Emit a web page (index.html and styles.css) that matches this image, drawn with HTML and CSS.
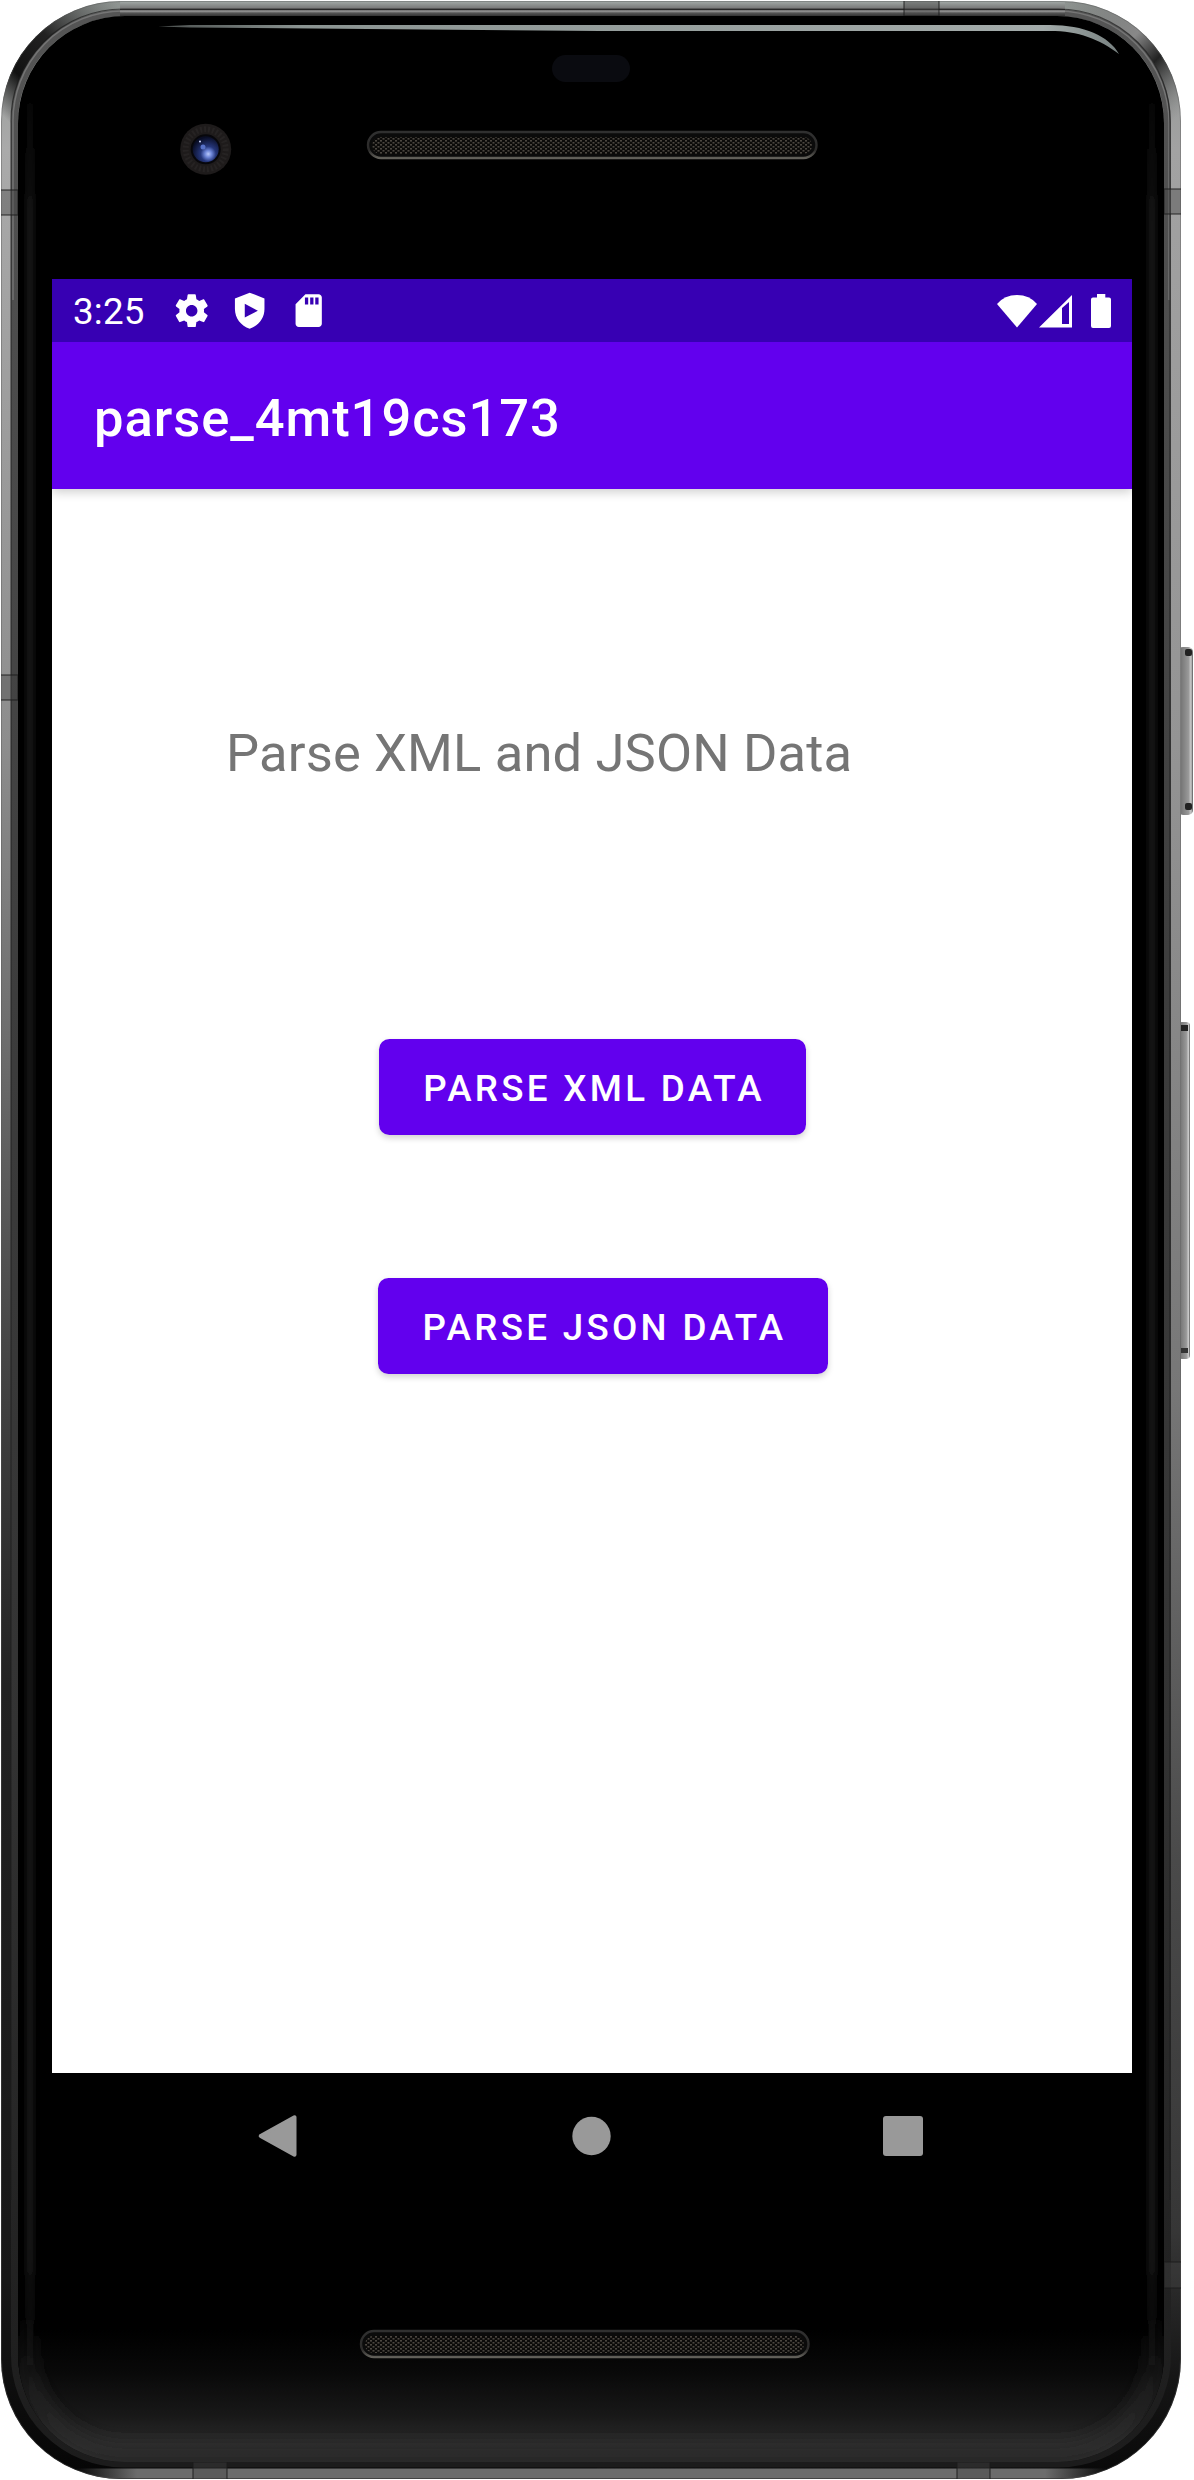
FILE: index.html
```html
<!DOCTYPE html>
<html lang="en">
<head>
<meta charset="utf-8">
<title>parse_4mt19cs173</title>
<link rel="stylesheet" href="styles.css">
</head>
<body>
<div class="phone">
  <svg class="chassis" viewBox="0 0 1194 2480" aria-hidden="true">
    <defs>
      <linearGradient id="rimL" gradientUnits="userSpaceOnUse" x1="0" y1="0" x2="0" y2="2480">
        <stop offset="0" stop-color="#8d9390"/><stop offset=".06" stop-color="#aaa"/><stop offset=".3" stop-color="#8d8d8d"/><stop offset=".42" stop-color="#6d6d6d"/><stop offset=".55" stop-color="#444"/><stop offset=".68" stop-color="#222"/><stop offset=".92" stop-color="#171717"/><stop offset="1" stop-color="#050505"/>
      </linearGradient>
      <linearGradient id="rimR" gradientUnits="userSpaceOnUse" x1="0" y1="0" x2="0" y2="2480">
        <stop offset="0" stop-color="#8d9390"/><stop offset=".06" stop-color="#a2a2a2"/><stop offset=".3" stop-color="#949494"/><stop offset=".56" stop-color="#777"/><stop offset=".75" stop-color="#4a4a4a"/><stop offset=".9" stop-color="#363636"/><stop offset=".96" stop-color="#151515"/><stop offset="1" stop-color="#080808"/>
      </linearGradient>
      <linearGradient id="edge" x1="0" y1="0" x2="0" y2="1">
        <stop offset="0" stop-color="#555"/><stop offset=".4" stop-color="#3d3d3d"/><stop offset=".7" stop-color="#333"/><stop offset="1" stop-color="#1c1c1c"/>
      </linearGradient>
      <linearGradient id="topRim" x1="0" y1="0" x2="0" y2="1">
        <stop offset="0" stop-color="#a4aba8"/><stop offset=".5" stop-color="#777"/><stop offset=".55" stop-color="#222"/><stop offset=".68" stop-color="#999"/><stop offset=".8" stop-color="#555"/><stop offset="1" stop-color="#333"/>
      </linearGradient>
      <linearGradient id="bottomRim" x1="0" y1="0" x2="1" y2="0">
        <stop offset="0" stop-color="#6c6c6c" stop-opacity="0"/><stop offset=".06" stop-color="#6c6c6c"/><stop offset=".94" stop-color="#6c6c6c"/><stop offset="1" stop-color="#6c6c6c" stop-opacity="0"/>
      </linearGradient>
      <linearGradient id="cornerTL" gradientUnits="userSpaceOnUse" x1="2" y1="115" x2="115" y2="2">
        <stop offset="0" stop-color="#111" stop-opacity="0"/><stop offset=".25" stop-color="#111"/><stop offset=".55" stop-color="#222"/><stop offset="1" stop-color="#444" stop-opacity="0"/>
      </linearGradient>
      <linearGradient id="cornerTR" gradientUnits="userSpaceOnUse" x1="1067" y1="2" x2="1180" y2="115">
        <stop offset="0" stop-color="#666" stop-opacity="0"/><stop offset=".45" stop-color="#888"/><stop offset=".65" stop-color="#222"/><stop offset="1" stop-color="#777" stop-opacity="0"/>
      </linearGradient>
      <linearGradient id="fade" x1="0" y1="0" x2="0" y2="1">
        <stop offset="0" stop-color="#000"/><stop offset=".3" stop-color="#080808"/><stop offset=".65" stop-color="#181818"/><stop offset=".88" stop-color="#2c2c2c"/><stop offset="1" stop-color="#262626"/>
      </linearGradient>
      <linearGradient id="glow" gradientUnits="userSpaceOnUse" x1="0" y1="80" x2="0" y2="2390">
        <stop offset="0" stop-color="#1c1c1c" stop-opacity="0"/><stop offset=".06" stop-color="#1c1c1c"/><stop offset=".94" stop-color="#1c1c1c"/><stop offset="1" stop-color="#1c1c1c" stop-opacity="0"/>
      </linearGradient>
      <linearGradient id="pool" gradientUnits="userSpaceOnUse" x1="0" y1="2310" x2="0" y2="2430">
        <stop offset="0" stop-color="#2c2c2c" stop-opacity="0"/><stop offset="1" stop-color="#2c2c2c"/>
      </linearGradient>
      <linearGradient id="shine" gradientUnits="userSpaceOnUse" x1="158" y1="0" x2="1120" y2="0">
        <stop offset="0" stop-color="#7d8583" stop-opacity=".6"/><stop offset=".15" stop-color="#8b9492"/><stop offset=".92" stop-color="#a3abaa"/><stop offset="1" stop-color="#778180"/>
      </linearGradient>
      <linearGradient id="slot" x1="0" y1="0" x2="0" y2="1">
        <stop offset="0" stop-color="#303030"/><stop offset=".7" stop-color="#2c2b2a"/><stop offset="1" stop-color="#62605a"/>
      </linearGradient>
      <linearGradient id="key" x1="0" y1="0" x2="1" y2="0">
        <stop offset="0" stop-color="#666"/><stop offset=".3" stop-color="#7d7d7d"/><stop offset=".7" stop-color="#999"/><stop offset=".87" stop-color="#ccc"/><stop offset="1" stop-color="#555"/>
      </linearGradient>
      <radialGradient id="lens" cx=".6" cy=".68" r=".65">
        <stop offset="0" stop-color="#b9c8fa"/><stop offset=".2" stop-color="#6e86d8"/><stop offset=".45" stop-color="#25367a"/><stop offset="1" stop-color="#090d24"/>
      </radialGradient>
      <pattern id="mesh" width="5" height="4" patternUnits="userSpaceOnUse">
        <rect width="5" height="4" fill="#0b0a09"/><rect width="2" height="1.6" fill="#4b4640"/><rect x="2.5" y="2" width="2" height="1.6" fill="#4b4640"/>
      </pattern>
      <clipPath id="body"><rect x="1" y="1" width="1180" height="2478" rx="120"/></clipPath>
      <clipPath id="glass"><rect x="18" y="16" width="1146" height="2446" rx="107"/></clipPath>
      <filter id="soft" x="-10%" y="-10%" width="120%" height="120%"><feGaussianBlur stdDeviation="9"/></filter>
      <filter id="haze" filterUnits="userSpaceOnUse" x="0" y="0" width="1194" height="2480"><feGaussianBlur stdDeviation="3"/></filter>
    </defs>

    <!-- volume and power keys -->
    <rect x="1178" y="647" width="15" height="168" rx="5" fill="url(#key)"/>
    <rect x="1185" y="649" width="7" height="7" rx="2" fill="#222"/><rect x="1185" y="803" width="7" height="7" rx="2" fill="#222"/>
    <rect x="1178" y="1022" width="12" height="337" rx="4" fill="url(#key)"/>
    <rect x="1181" y="1025" width="7" height="6" fill="#222"/><rect x="1181" y="1348" width="7" height="5" fill="#333"/>

    <!-- metal rim -->
    <g clip-path="url(#body)">
      <rect width="597" height="2480" fill="url(#rimL)"/>
      <rect x="597" width="597" height="2480" fill="url(#rimR)"/>
      <path d="M7 150V121A114 114 0 0 1 121 7H150" fill="none" stroke="url(#cornerTL)" stroke-width="13"/>
      <path d="M1045 7H1061A114 114 0 0 1 1175 121V150" fill="none" stroke="url(#cornerTR)" stroke-width="13"/>
      <rect x="14.500" y="13" width="1153" height="2451" rx="109" fill="none" stroke="url(#edge)" stroke-width="7"/>
      <rect x="120" y="1" width="945" height="15" fill="url(#topRim)"/>
      <rect x="75" y="2468.500" width="1032" height="10" fill="url(#bottomRim)"/>
      <path d="M13 300V123A110 110 0 0 1 123 11H1058A112 112 0 0 1 1169 123V300" fill="none" stroke="#8a8a8a" stroke-width="1.500" opacity=".6"/>
      <path d="M11 2200V123A112 112 0 0 1 123 9H1058A112 112 0 0 1 1170 123V2200" fill="none" stroke="#1c1c1c" stroke-width="1.200" opacity=".7"/>
      <rect x="1.500" y="1.500" width="1179" height="2477" rx="119.500" fill="none" stroke="#555" stroke-opacity=".4"/>
      <!-- antenna breaks -->
      <g fill="#444" fill-opacity=".4" stroke="#1b1b1b" stroke-opacity=".7" stroke-width="1.300">
        <rect x="0" y="190" width="18" height="25"/><rect x="0" y="675" width="18" height="25"/>
        <rect x="1164" y="189" width="18" height="25"/><rect x="904" y="0" width="35" height="16"/>
        <rect x="1164" y="2262" width="18" height="26"/><rect x="193" y="2462" width="34" height="18"/><rect x="957" y="2462" width="33" height="18"/>
      </g>
    </g>

    <!-- front glass -->
    <g clip-path="url(#glass)">
      <rect x="18" y="16" width="1146" height="2446" fill="#000"/>
      <rect x="18" y="2330" width="1146" height="132" fill="url(#fade)"/>
      <path d="M27 2300V2355A98 98 0 0 0 125 2453H1057A98 98 0 0 0 1155 2355V2300" fill="none" stroke="url(#pool)" stroke-width="16" filter="url(#soft)"/>
      <g filter="url(#haze)" fill="url(#glow)">
        <rect x="27" y="80" width="6" height="2310"/>
        <rect x="1149" y="80" width="6" height="2310"/>
      </g>
    </g>
    <path d="M158 26.500 190 25H1050C1084 25 1109 36 1119 54C1099 39 1079 31 1050 31H600L190 27.500Z" fill="url(#shine)"/>

    <rect x="552" y="55" width="78" height="27" rx="13.500" fill="#0a0b10"/>
    <circle cx="205.700" cy="149.300" r="25.500" fill="#1e1b1b"/>
    <circle cx="205.700" cy="149.300" r="20" fill="none" stroke="#262323" stroke-width="6" stroke-dasharray="2 2"/>
    <circle cx="205.700" cy="149.300" r="15" fill="#07070b"/>
    <circle cx="205.700" cy="149.300" r="13" fill="url(#lens)"/>
    <circle cx="203" cy="147" r="2.500" fill="#5872c8"/><circle cx="200" cy="141.500" r="1" fill="#cfd8ff"/>

    <rect x="368" y="132" width="448.500" height="26" rx="13" fill="#0b0b0b" stroke="url(#slot)" stroke-width="2.400"/>
    <rect x="372" y="137" width="440" height="17" rx="8.500" fill="url(#mesh)"/>
    <rect x="361" y="2331" width="447.500" height="26" rx="13" fill="#0b0b0b" stroke="url(#slot)" stroke-width="2.400"/>
    <rect x="365" y="2336" width="439" height="17" rx="8.500" fill="url(#mesh)"/>
  </svg>

  <main class="screen">
    <div class="status">
      <span class="clock">3:25</span>
      <div class="notices">
        <svg class="glyph" viewBox="0 0 24 24"><path d="M19.430 12.980c.040-.320.070-.640.070-.980s-.030-.660-.070-.980l2.110-1.650c.190-.150.240-.420.120-.640l-2-3.460c-.120-.220-.390-.300-.610-.220l-2.490 1c-.520-.400-1.080-.730-1.690-.980l-.380-2.650C14.460 2.180 14.250 2 14 2h-4c-.250 0-.460.180-.490.420l-.380 2.650c-.610.250-1.170.590-1.690.980l-2.490-1c-.230-.090-.490 0-.610.220l-2 3.460c-.130.220-.070.490.120.640l2.110 1.650c-.040.320-.070.650-.070.980s.030.660.070.980l-2.110 1.650c-.190.150-.240.420-.120.640l2 3.460c.120.220.390.300.610.220l2.490-1c.520.400 1.080.730 1.690.980l.380 2.650c.030.240.240.420.490.420h4c.250 0 .460-.180.490-.420l.380-2.650c.610-.250 1.170-.590 1.690-.980l2.490 1c.230.090.490 0 .610-.220l2-3.460c.120-.220.070-.490-.120-.640l-2.110-1.650zM12 15.500c-1.930 0-3.500-1.570-3.500-3.500s1.570-3.500 3.500-3.500 3.500 1.570 3.500 3.500-1.570 3.500-3.500 3.500z"/></svg>
        <svg class="glyph" viewBox="0 0 24 24"><path fill-rule="evenodd" d="M12 1 3 4.500V11c0 5.500 3.600 10.300 9 12 5.400-1.700 9-6.500 9-12V4.500zM9 7.800 17 12 9 16.200z"/></svg>
        <svg class="glyph" viewBox="0 0 24 24"><path fill-rule="evenodd" d="M18 2h-8L4 8v12c0 1.100.900 2 2 2h12c1.100 0 2-.900 2-2V4c0-1.100-.900-2-2-2zM9.700 4h2v4.200h-2zM12.900 4h2v4.200h-2zM16 4h2v4.200h-2z"/></svg>
      </div>
      <div class="signals">
        <svg class="wifi" viewBox="0 0 40 34"><path d="M0 10Q7.500 1 20 1T40 10L20 33.500Z"/></svg>
        <svg class="cell" viewBox="0 0 34 34"><path fill-rule="evenodd" d="M0 33.500 33 1V33.500ZM23 14 30 8V30H23Z"/></svg>
        <svg class="battery" viewBox="0 0 20 34"><path d="M6 0h8.300v3.400H18a2 2 0 0 1 2 2V32a2 2 0 0 1-2 2H2a2 2 0 0 1-2-2V5.400a2 2 0 0 1 2-2h4z"/></svg>
      </div>
    </div>
    <header class="appbar"><h1 class="title">parse_4mt19cs173</h1></header>
    <section class="content">
      <p class="caption">Parse XML and JSON Data</p>
      <button class="action action-xml">PARSE XML DATA</button>
      <button class="action action-json">PARSE JSON DATA</button>
    </section>
    <nav class="navbar">
      <svg class="nav-icon" viewBox="0 0 44 44"><path d="M38.500 3.300V40.700L4.700 22Z" stroke="#999" stroke-width="4" stroke-linejoin="round"/></svg>
      <svg class="nav-icon" viewBox="0 0 44 44"><circle cx="22.500" cy="22" r="19.200"/></svg>
      <svg class="nav-icon" viewBox="0 0 44 44"><rect x="2" y="2" width="40" height="40" rx="3"/></svg>
    </nav>
  </main>
</div>
</body>
</html>
```

FILE: styles.css
```css
* { box-sizing: border-box; }

body {
  margin: 0;
  background: #fff;
  font-family: Roboto, "Liberation Sans", sans-serif;
}

.phone {
  position: relative;
  width: 1194px;
  height: 2480px;
  padding: 279px 62px 0 52px;
  overflow: hidden;
}

/* device body sits behind the screen */
.chassis {
  position: absolute;
  top: 0;
  left: 0;
  width: 1194px;
  height: 2480px;
}

.screen {
  position: relative;
  display: flex;
  flex-direction: column;
  width: 1080px;
  height: 1920px;
}

.status {
  display: flex;
  align-items: center;
  height: 63px;
  padding: 0 21px;
  background: #3700b3;
  color: #fff;
}

.clock {
  width: 99.300px;
  padding-top: 3px;
  font-size: 36.75px;
  line-height: 44px;
  letter-spacing: .2px;
}

.notices { display: flex; gap: 18.800px; }

.glyph { width: 39.400px; height: 39.400px; fill: #fff; }

.signals {
  display: flex;
  margin-left: auto;
}

.signals svg { height: 34px; fill: #fff; }
.wifi { width: 40px; margin-right: 2px; }
.cell { width: 34px; margin-right: 18px; }
.battery { width: 20px; }

.appbar {
  display: flex;
  align-items: center;
  height: 147px;
  padding: 4px 42px 0;
  background: #6200ee;
  box-shadow: 0 3px 10px rgba(0, 0, 0, .2);
  clip-path: inset(0 0 -20px 0);
  z-index: 1;
}

.title {
  margin: 0;
  color: #fff;
  font-size: 52.5px;
  font-weight: 500;
  line-height: 62px;
  letter-spacing: .95px;
}

.content {
  display: flex;
  flex: 1;
  flex-direction: column;
  align-items: flex-start;
  padding: 229px 0 0 174px;
  background: #fff;
}

.caption {
  margin: 0;
  color: #757575;
  font-size: 52.5px;
  line-height: 70px;
  letter-spacing: .15px;
  white-space: nowrap;
}

.action {
  height: 96px;
  margin: 0;
  padding: 3px 0 0 3px;
  border: 0;
  border-radius: 10.5px;
  background: #6200ee;
  box-shadow: 0 3px 6px rgba(0, 0, 0, .18);
  color: #fff;
  font: 500 36.75px/44px Roboto, "Liberation Sans", sans-serif;
  letter-spacing: 3.3px;
  white-space: nowrap;
}

.action-xml { width: 427px; margin: 251px 0 0 153px; }
.action-json { width: 450px; margin: 143px 0 0 152px; }

.navbar {
  display: flex;
  align-items: center;
  justify-content: space-between;
  height: 126px;
  padding: 0 207px 0 204px;
}

.nav-icon { width: 44px; height: 44px; fill: #999; }
```
